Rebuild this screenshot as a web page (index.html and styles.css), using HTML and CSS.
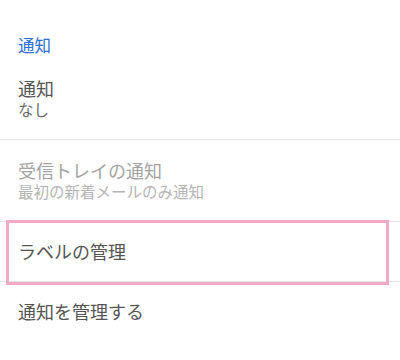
FILE: index.html
```html
<!DOCTYPE html>
<html lang="ja">

<head>
    <meta charset="UTF-8">
    <meta name="viewport" content="width=device-width, initial-scale=1.0">
    <title>通知</title>
    <link rel="stylesheet" href="styles.css">
</head>

<body>
    <div class="section-title">通知</div>

    <div class="setting-row">
        <div class="row-title">通知</div>
        <div class="row-sub">なし</div>
    </div>

    <div class="setting-row disabled">
        <div class="row-title">受信トレイの通知</div>
        <div class="row-sub">最初の新着メールのみ通知</div>
    </div>

    <div class="setting-row single highlighted">
        <div class="row-title">ラベルの管理</div>
    </div>

    <div class="setting-row single last">
        <div class="row-title">通知を管理する</div>
    </div>
</body>

</html>
```

FILE: styles.css
```css
body {
    font-family: "Noto Sans CJK JP", "Noto Sans", sans-serif;
    margin: 0;
    background-color: #fff;
    width: 400px;
}

.section-title {
    padding: 35px 18px 3px;
    font-size: 16.5px;
    line-height: 20px;
    color: #2c6fd3;
}

.setting-row {
    padding: 19px 18px 20px;
    border-bottom: 1px solid #e3e3e3;
}

.setting-row.single {
    padding: 18px 18px 19px;
}

.setting-row.last {
    border-bottom: none;
}

.row-title {
    font-size: 18px;
    line-height: 22px;
    color: #555;
}

.row-sub {
    font-size: 15.5px;
    line-height: 20px;
    color: #6a6a6a;
}

.disabled .row-title {
    color: #a3a3a3;
}

.disabled .row-sub {
    color: #b5b5b5;
}

/* pink highlight drawn over the row */
.highlighted {
    position: relative;
}

.highlighted::after {
    content: "";
    position: absolute;
    top: -2px;
    left: 6px;
    right: 11px;
    bottom: -4px;
    border: 3px solid #f2a8c7;
}
```
